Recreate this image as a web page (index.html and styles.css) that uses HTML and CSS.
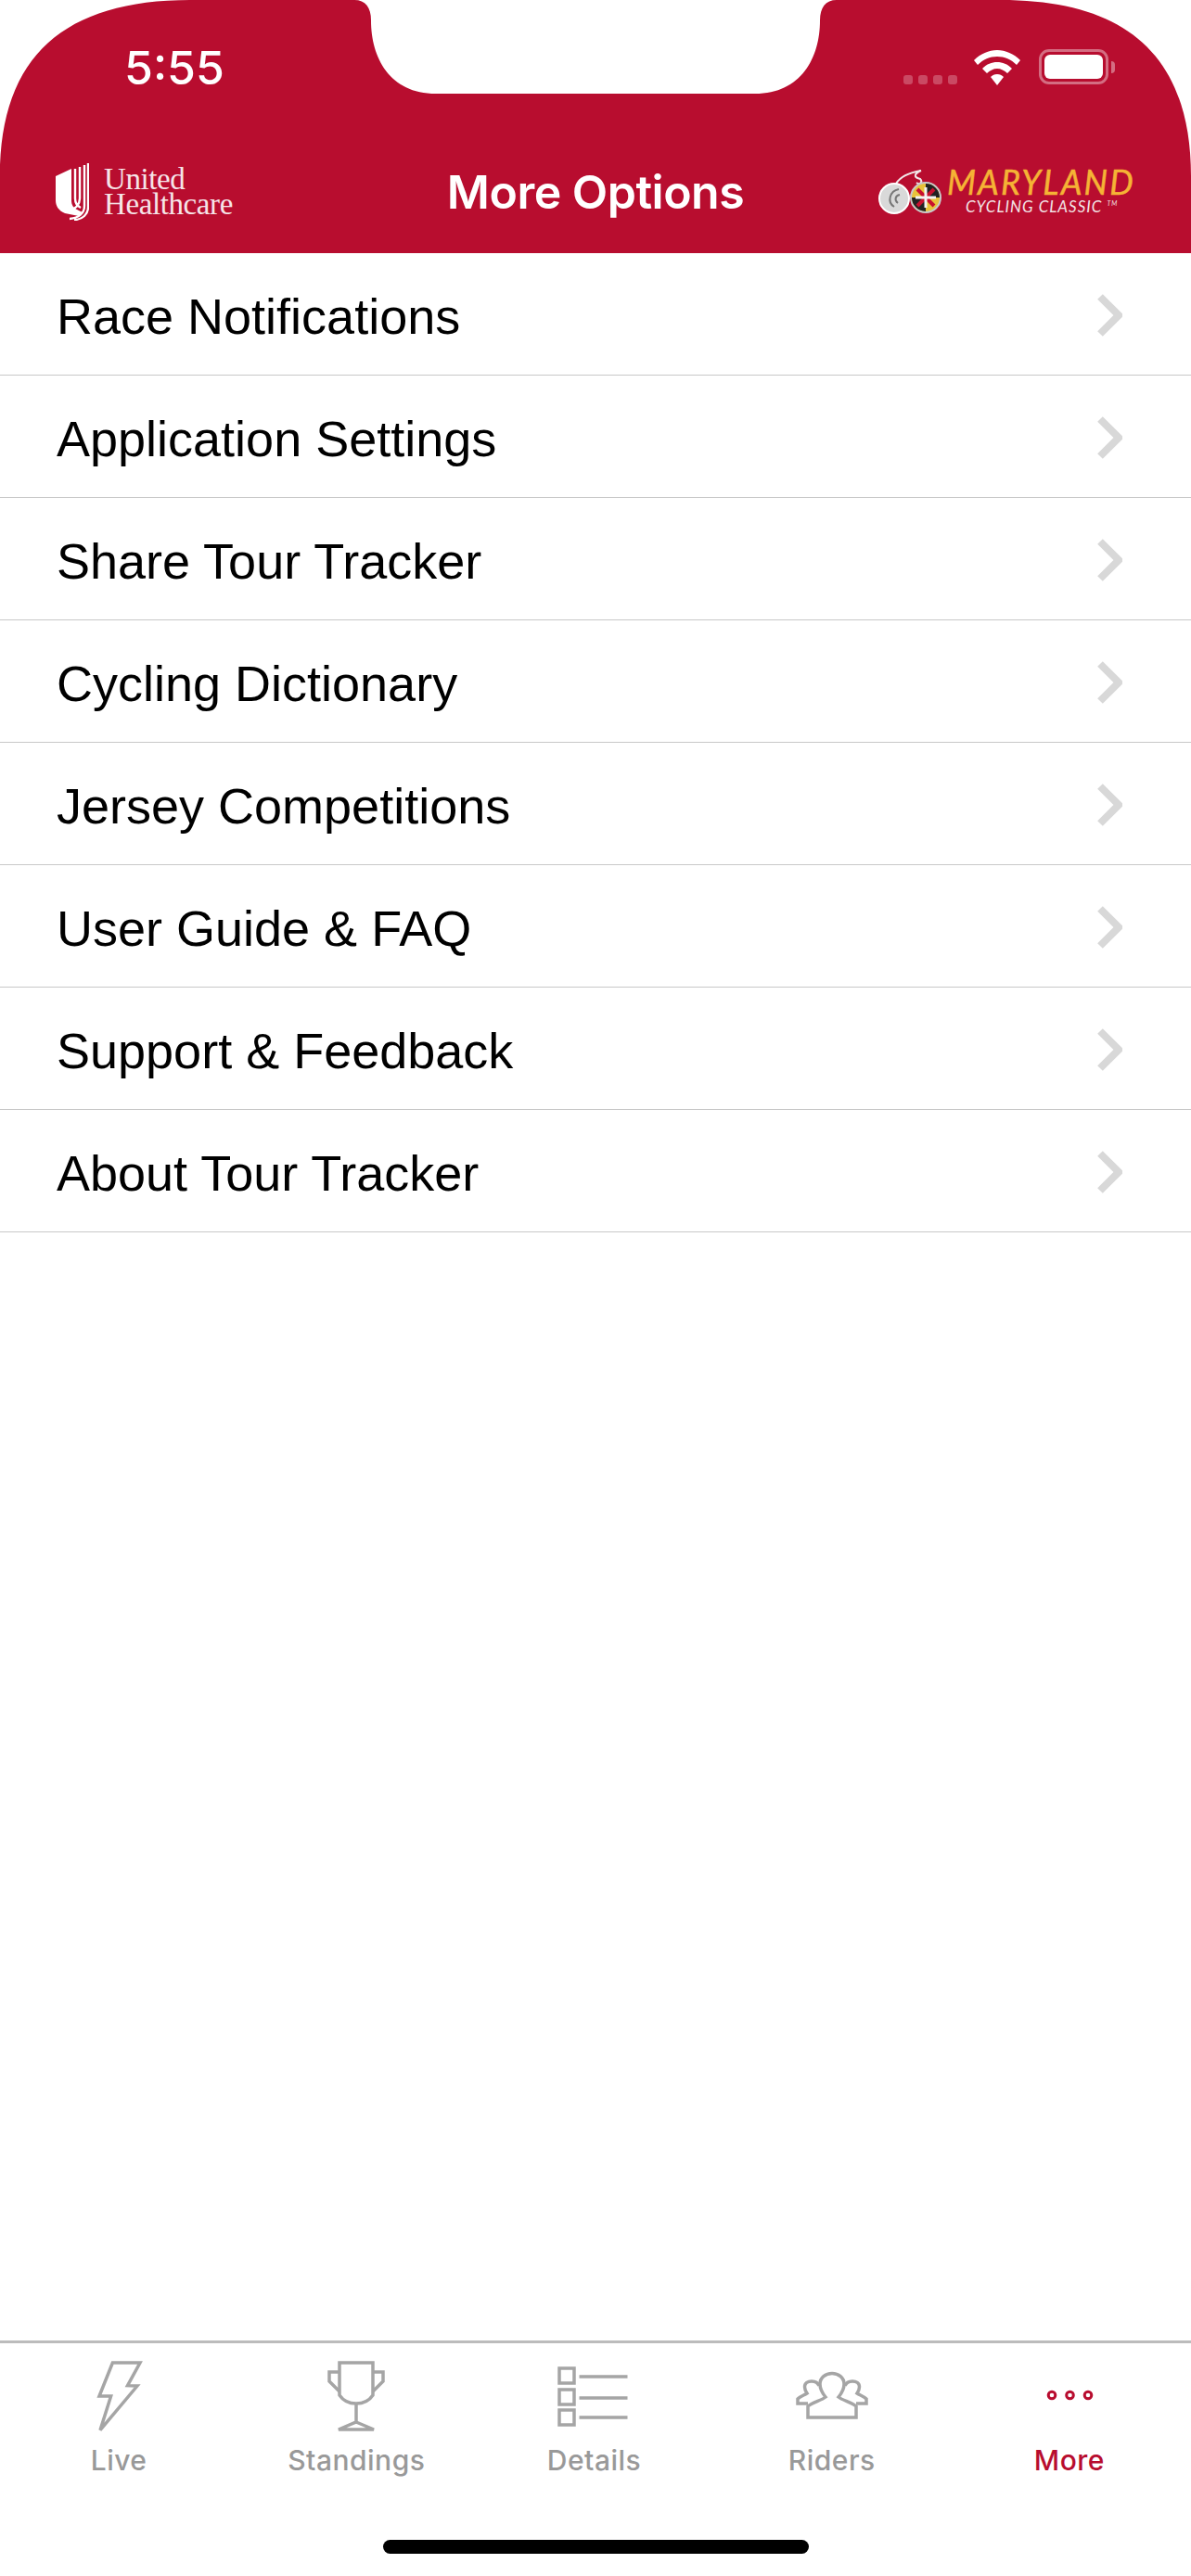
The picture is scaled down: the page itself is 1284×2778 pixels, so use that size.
FILE: index.html
```html
<!DOCTYPE html>
<html lang="en">
<head>
    <meta charset="UTF-8">
    <meta name="viewport" content="width=device-width, initial-scale=1.0">
    <link rel="stylesheet" href="styles.css">
</head>
<body>
    <header class="header">
        <svg class="header-bg" viewBox="0 0 1284 273" width="1284" height="273">
            <path d="M0 273 V190 C0 60 70 0 205 0 H382 C394 0 400 8 400 22 C400 62 420 101 470 101 H814 C864 101 884 62 884 22 C884 8 890 0 902 0 H1079 C1214 0 1284 60 1284 190 V273 Z"/>
        </svg>
        <div class="status">
            <span class="time">5:55</span>
            <div class="status-icons">
                <div class="signal"><i></i><i></i><i></i><i></i></div>
                <svg class="wifi" viewBox="0 0 50 38" width="50" height="38">
                    <path d="M25 0 C34 0 43 4 50 11 L46 16 C40 10 33 7 25 7 C17 7 10 10 4 16 L0 11 C7 4 16 0 25 0 Z"/>
                    <path d="M25 13 C31 13 36 15 41 20 L36 25 C33 22 29 20 25 20 C21 20 17 22 14 25 L9 20 C14 15 19 13 25 13 Z"/>
                    <path d="M25 26 C28 26 30 27 32 29 L25 38 L18 29 C20 27 22 26 25 26 Z"/>
                </svg>
                <div class="battery"><div class="battery-fill"></div></div>
                <div class="battery-nub"></div>
            </div>
        </div>
        <div class="nav">
            <div class="uhc">
                <svg viewBox="0 0 36 62" width="36" height="62">
                    <path class="uhc-solid" d="M0 14 L17 6 V40 C17 45 19 48 23 50 L29 53 L25 57 L10 54 C3 51 0 46 0 40 Z"/>
                    <path class="uhc-line" d="M21 6 V38 C21 43 23 46 27 48 M26 4 V38 C26 45 22 49 14 52 M31 2 V46 C31 54 25 59 15 60 M35 0 V47 C35 55 29 61 20 61"/>
                </svg>
                <div class="uhc-text">United<br>Healthcare</div>
            </div>
            <h1 class="title">More Options</h1>
            <div class="mcc">
                <svg viewBox="0 0 72 52" width="72" height="52">
                    <path class="rider" d="M21 17 C26 9 36 5 48 3 C41 6 39 10 47 12 C50 15 47 19 43 16"/>
                    <circle class="wheel-back" cx="19" cy="33" r="16"/>
                    <path class="wheel-spin" d="M24 23 C14 25 11 37 19 42 M25 29 C20 30 19 35 23 38"/>
                    <circle class="wheel-front" cx="53" cy="32" r="16"/>
                    <path class="flag-black" d="M53 17 A15 15 0 0 1 68 32 H53 Z M53 47 A15 15 0 0 1 38 32 H53 Z"/>
                    <path class="flag-red" d="M44 23 L62 41 M62 23 L44 41"/>
                    <path class="flag-white" d="M53 21 V43 M42 32 H64"/>
                </svg>
                <div class="mcc-text">
                    <div class="mcc-name">MARYLAND</div>
                    <div class="mcc-sub">CYCLING CLASSIC<sup>TM</sup></div>
                </div>
            </div>
        </div>
    </header>

    <main class="list">
        <a class="row"><span>Race Notifications</span><svg class="chev" viewBox="0 0 27 46" width="27" height="46"><path d="M3 3 L23 23 L3 43"/></svg></a>
        <a class="row"><span>Application Settings</span><svg class="chev" viewBox="0 0 27 46" width="27" height="46"><path d="M3 3 L23 23 L3 43"/></svg></a>
        <a class="row"><span>Share Tour Tracker</span><svg class="chev" viewBox="0 0 27 46" width="27" height="46"><path d="M3 3 L23 23 L3 43"/></svg></a>
        <a class="row"><span>Cycling Dictionary</span><svg class="chev" viewBox="0 0 27 46" width="27" height="46"><path d="M3 3 L23 23 L3 43"/></svg></a>
        <a class="row"><span>Jersey Competitions</span><svg class="chev" viewBox="0 0 27 46" width="27" height="46"><path d="M3 3 L23 23 L3 43"/></svg></a>
        <a class="row"><span>User Guide &amp; FAQ</span><svg class="chev" viewBox="0 0 27 46" width="27" height="46"><path d="M3 3 L23 23 L3 43"/></svg></a>
        <a class="row"><span>Support &amp; Feedback</span><svg class="chev" viewBox="0 0 27 46" width="27" height="46"><path d="M3 3 L23 23 L3 43"/></svg></a>
        <a class="row"><span>About Tour Tracker</span><svg class="chev" viewBox="0 0 27 46" width="27" height="46"><path d="M3 3 L23 23 L3 43"/></svg></a>
    </main>

    <nav class="tabs">
        <a class="tab">
            <svg viewBox="0 0 80 80" width="80" height="80"><path d="M33.4 3 H63 L49.5 27.7 L60 28 L20 75.7 L31.6 39 L19 39 Z"/></svg>
            <span>Live</span>
        </a>
        <a class="tab">
            <svg viewBox="0 0 80 80" width="80" height="80">
                <path d="M22 3 H58 V38 C54 44 47 47 40 47 C33 47 26 44 22 38 Z"/>
                <path d="M22 13 H11 V23 L22 34 M58 13 H69 V23 L58 34"/>
                <path d="M40 47 V67 M40 67 L59 75 H21 Z"/>
            </svg>
            <span>Standings</span>
        </a>
        <a class="tab">
            <svg viewBox="0 0 80 80" width="80" height="80">
                <path d="M3 9 H19 V25 H3 Z M3 32 H19 V48 H3 Z M3 54 H19 V70 H3 Z"/>
                <path d="M24.5 18 H76.5 M24.5 41 H76.5 M24.5 62 H76.5"/>
            </svg>
            <span>Details</span>
        </a>
        <a class="tab">
            <svg viewBox="0 0 80 80" width="80" height="80">
                <path d="M14 62 V50 C20 45 28 44 33 40 C28 34 27 28 27 26 C27 19 33 14.5 40 14.5 C47 14.5 53 19 53 26 C53 28 52 34 47 40 C52 44 60 45 66 50 V62 Z"/>
                <path d="M14 47 H3 V42 C6 39 10 38 13 36 C11 33 10.5 31 10.5 29 C10.5 25 14 23 18 23 C22 23 25 25 26 28"/>
                <path d="M66 47 H77 V42 C74 39 70 38 67 36 C69 33 69.5 31 69.5 29 C69.5 25 66 23 62 23 C58 23 55 25 54 28"/>
            </svg>
            <span>Riders</span>
        </a>
        <a class="tab tab-active">
            <svg viewBox="0 0 80 80" width="80" height="80">
                <circle cx="21" cy="38" r="3.8"/><circle cx="40.5" cy="38" r="3.8"/><circle cx="60" cy="38" r="3.8"/>
            </svg>
            <span>More</span>
        </a>
    </nav>
    <div class="home-bar"></div>
</body>
</html>
```

FILE: styles.css
```css
body {
    margin: 0;
    height: 2778px;
    width: 1284px;
    overflow: hidden;
    position: relative;
    display: flex;
    flex-direction: column;
    background: #fff;
    font-family: 'Liberation Sans', sans-serif;
}

.header {
    position: relative;
    height: 273px;
    box-sizing: border-box;
    border-bottom: 1px solid #b5a3a8;
    color: #fff;
    flex-shrink: 0;
}

.header-bg {
    position: absolute;
    top: 0;
    left: 0;
    display: block;
}

.header-bg path {
    fill: #b80d2f;
}

.status {
    position: relative;
    height: 160px;
    display: flex;
    justify-content: space-between;
    padding: 0 82px 0 134px;
    box-sizing: border-box;
}

.time {
    font-family: 'Inter', sans-serif;
    font-weight: 500;
    font-size: 50px;
    line-height: 50px;
    margin-top: 48px;
}

.status-icons {
    display: flex;
    align-items: flex-start;
    padding-top: 53px;
}

.signal {
    display: flex;
    gap: 6px;
    margin-top: 28px;
    margin-right: 18px;
}

.signal i {
    display: block;
    width: 10px;
    height: 10px;
    border-radius: 3px;
    background: rgba(255, 255, 255, 0.25);
}

.wifi {
    display: block;
    margin-top: 1px;
    margin-right: 20px;
}

.wifi path {
    fill: #fff;
}

.battery {
    width: 75px;
    height: 38px;
    box-sizing: border-box;
    border: 3px solid rgba(255, 255, 255, 0.4);
    border-radius: 11px;
    padding: 3px;
}

.battery-fill {
    height: 100%;
    background: #fff;
    border-radius: 6px;
}

.battery-nub {
    width: 4px;
    height: 13px;
    margin: 13px 0 0 3px;
    background: rgba(255, 255, 255, 0.4);
    border-radius: 0 4px 4px 0;
}

.nav {
    position: relative;
    display: grid;
    grid-template-columns: 1fr auto 1fr;
    align-items: center;
    height: 93px;
    padding: 0 60px 0 60px;
    box-sizing: border-box;
}

.title {
    margin: 0;
    font-family: 'Inter', sans-serif;
    font-weight: 600;
    font-size: 50px;
    line-height: 60px;
    letter-spacing: -0.5px;
}

.uhc {
    display: flex;
    align-items: center;
    gap: 16px;
}

.uhc-solid {
    fill: #fff;
}

.uhc-line {
    fill: none;
    stroke: #fff;
    stroke-width: 2.4;
}

.uhc-text {
    font-family: 'Liberation Serif', serif;
    font-size: 33px;
    line-height: 27px;
    letter-spacing: -0.4px;
    color: #f6e4e8;
}

.mcc {
    justify-self: end;
    display: flex;
    align-items: flex-start;
    gap: 4px;
}

.rider {
    fill: none;
    stroke: #f2e6e8;
    stroke-width: 2;
}

.wheel-back {
    fill: #d9d9d9;
    stroke: #fff;
    stroke-width: 2;
}

.wheel-spin {
    fill: none;
    stroke: #777;
    stroke-width: 2;
}

.wheel-front {
    fill: #e8c23a;
    stroke: #c9c9c9;
    stroke-width: 2;
}

.flag-black {
    fill: #222;
}

.flag-red {
    fill: none;
    stroke: #c8102e;
    stroke-width: 4;
}

.flag-white {
    fill: none;
    stroke: #f4f4f4;
    stroke-width: 3;
}

.mcc-text {
    display: flex;
    flex-direction: column;
    align-items: flex-start;
}

.mcc-name {
    font-family: 'Lato', sans-serif;
    font-style: italic;
    font-size: 36px;
    line-height: 30px;
    letter-spacing: 2.2px;
    -webkit-text-stroke: 0.5px #f5b335;
    color: #f5b335;
}

.mcc-sub {
    font-family: 'Lato', sans-serif;
    font-style: italic;
    font-size: 17px;
    line-height: 18px;
    letter-spacing: 1px;
    margin: 3px 0 0 20px;
    color: #f3e4e6;
}

.mcc-sub sup {
    font-size: 7px;
    line-height: 0;
    margin-left: 5px;
}

.list {
    flex: 1;
}

.row {
    display: flex;
    align-items: center;
    justify-content: space-between;
    height: 131px;
    padding: 0 74px 0 61px;
    border-bottom: 1px solid #c8c8c8;
    font-size: 54px;
    color: #000;
}

.row span {
    padding-top: 5px;
}

.chev {
    display: block;
    margin-top: 2px;
}

.chev path {
    fill: none;
    stroke: #d8d8d8;
    stroke-width: 8;
}

.tabs {
    display: grid;
    grid-template-columns: repeat(5, 1fr);
    height: 251px;
    padding-right: 3px;
    border-top: 3px solid #bcbcbc;
    flex-shrink: 0;
}

.tab {
    display: flex;
    flex-direction: column;
    align-items: center;
    padding-top: 18px;
    color: #999;
    font-family: 'Inter', sans-serif;
    font-weight: 500;
    font-size: 30px;
    letter-spacing: 0.5px;
}

.tab svg {
    display: block;
    margin-bottom: 10px;
}

.tab svg path {
    fill: none;
    stroke: #a5a5a5;
    stroke-width: 3.5;
}

.tab-active {
    color: #b80d2f;
}

.tab-active svg circle {
    fill: none;
    stroke: #b80d2f;
    stroke-width: 3;
}

.home-bar {
    position: absolute;
    left: 413px;
    top: 2739px;
    width: 459px;
    height: 15px;
    border-radius: 8px;
    background: #000;
}
```
